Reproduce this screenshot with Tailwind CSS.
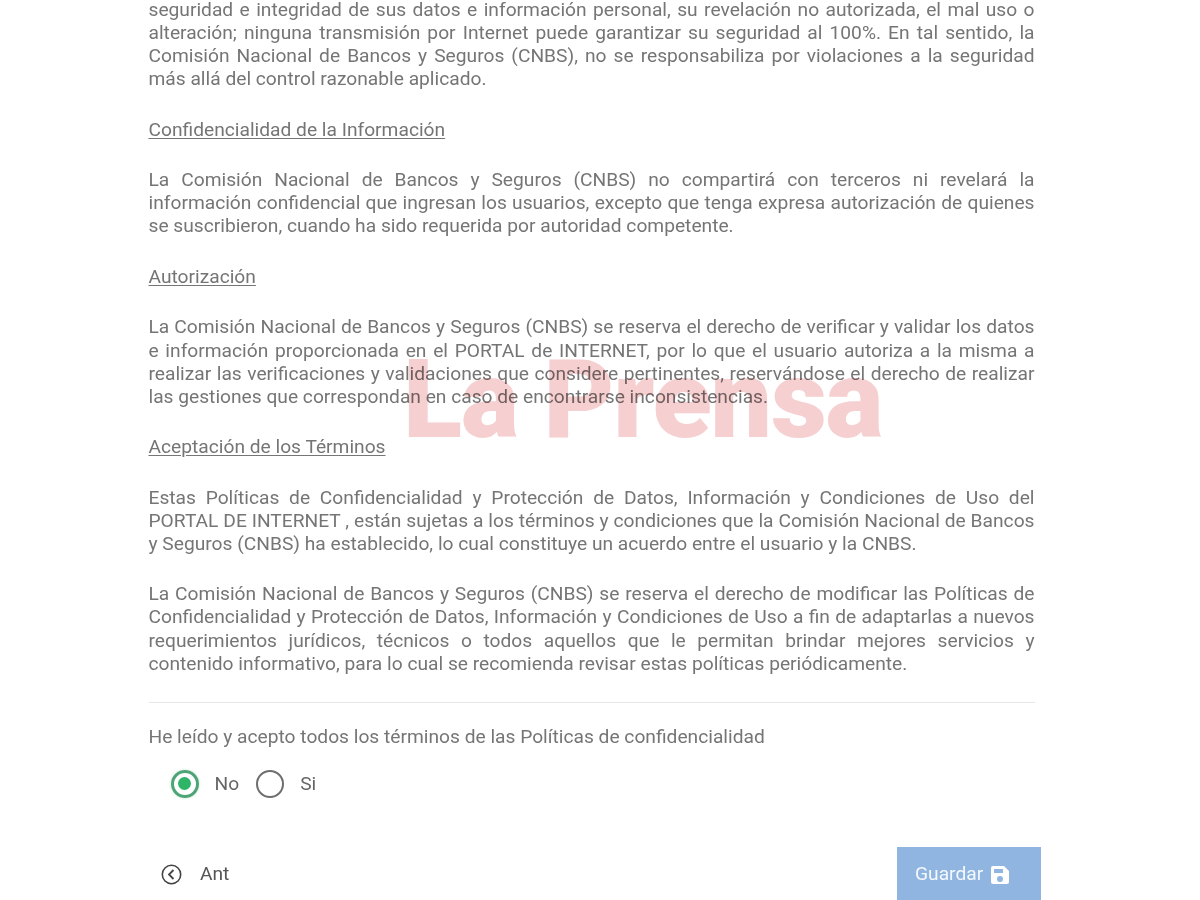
<!DOCTYPE html>
<html lang="es">

<head>
    <meta charset="UTF-8">
    <title>Políticas de Confidencialidad</title>
    <script src="https://cdn.jsdelivr.net/npm/@tailwindcss/browser@4"></script>
</head>

<body class="bg-white h-[900px] overflow-hidden relative font-['Roboto',sans-serif] text-[#757575]">

    <div class="w-[886px] ml-[148.5px] -mt-[2px] text-[19.2px] leading-[23.1px]">
        <p class="text-justify">seguridad e integridad de sus datos e información personal, su revelación no autorizada, el mal uso o alteración; ninguna transmisión por Internet puede garantizar su seguridad al 100%. En tal sentido, la Comisión Nacional de Bancos y Seguros (CNBS), no se responsabiliza por violaciones a la seguridad más allá del control razonable aplicado.</p>

        <h3 class="underline underline-offset-2 mt-[27.4px]">Confidencialidad de la Información</h3>
        <p class="text-justify mt-[27.4px]">La Comisión Nacional de Bancos y Seguros (CNBS) no compartirá con terceros ni revelará la información confidencial que ingresan los usuarios, excepto que tenga expresa autorización de quienes se suscribieron, cuando ha sido requerida por autoridad competente.</p>

        <h3 class="underline underline-offset-2 mt-[27.4px]">Autorización</h3>
        <p class="text-justify mt-[27.4px]">La Comisión Nacional de Bancos y Seguros (CNBS) se reserva el derecho de verificar y validar los datos e información proporcionada en el PORTAL de INTERNET, por lo que el usuario autoriza a la misma a realizar las verificaciones y validaciones que considere pertinentes, reservándose el derecho de realizar las gestiones que correspondan en caso de encontrarse inconsistencias.</p>

        <h3 class="underline underline-offset-2 mt-[27.4px]">Aceptación de los Términos</h3>
        <p class="text-justify mt-[27.4px]">Estas Políticas de Confidencialidad y Protección de Datos, Información y Condiciones de Uso del PORTAL DE INTERNET , están sujetas a los términos y condiciones que la Comisión Nacional de Bancos y Seguros (CNBS) ha establecido, lo cual constituye un acuerdo entre el usuario y la CNBS.</p>
        <p class="text-justify mt-[27.4px]">La Comisión Nacional de Bancos y Seguros (CNBS) se reserva el derecho de modificar las Políticas de Confidencialidad y Protección de Datos, Información y Condiciones de Uso a fin de adaptarlas a nuevos requerimientos jurídicos, técnicos o todos aquellos que le permitan brindar mejores servicios y contenido informativo, para lo cual se recomienda revisar estas políticas periódicamente.</p>

        <hr class="border-[#e6e6e6] mt-[27px]">
        <p class="mt-[22px]">He leído y acepto todos los términos de las Políticas de confidencialidad</p>

        <div class="flex items-center mt-[22px] ml-[22px] h-[28px]">
            <span class="w-[28px] h-[28px] rounded-full border-[3px] border-[#4fa477] flex items-center justify-center shadow-[0_0_3px_#bdecd0]">
                <span class="w-[13px] h-[13px] rounded-full bg-[#2fb568]"></span>
            </span>
            <span class="ml-[16px] text-[#666]">No</span>
            <span class="ml-[17px] w-[28px] h-[28px] rounded-full border-[2.5px] border-[#6e6e6e]"></span>
            <span class="ml-[16px] text-[#666]">Si</span>
        </div>
    </div>

    <div class="absolute left-[897px] top-[847px] w-[144px] h-[53px] bg-[#8fb5e0] text-white/90 flex items-center pl-[18px] gap-[7px] text-[19.2px]">
        <span class="pt-[2px]">Guardar</span>
        <svg class="w-[20px] h-[20px] mt-[2px]" viewBox="0 0 20 20" fill="#fff">
            <path fill-rule="evenodd" d="M3 1h11l5 5v11a2 2 0 0 1-2 2H3a2 2 0 0 1-2-2V3a2 2 0 0 1 2-2zm1 3v4h9V4H4zm6 7a3 3 0 1 0 0 6 3 3 0 0 0 0-6z"/>
        </svg>
    </div>

    <div class="absolute left-[161px] top-[863px] h-[22px] flex items-center gap-[18px] text-[19.2px] text-[#555]">
        <svg class="w-[21px] h-[21px]" viewBox="0 0 21 21" fill="none" stroke="#444" stroke-width="1.6">
            <circle cx="10.5" cy="10.5" r="9.2"/>
            <path d="M12.5 6 L8 10.5 L12.5 15" stroke-width="1.8"/>
        </svg>
        <span>Ant</span>
    </div>

    <!-- marca de agua -->
    <div class="absolute left-[403px] top-[337px] font-black text-[109px] leading-[126px] tracking-[-1.2px] whitespace-nowrap text-[#f6cfd0] mix-blend-multiply">La Prensa</div>

</body>

</html>
